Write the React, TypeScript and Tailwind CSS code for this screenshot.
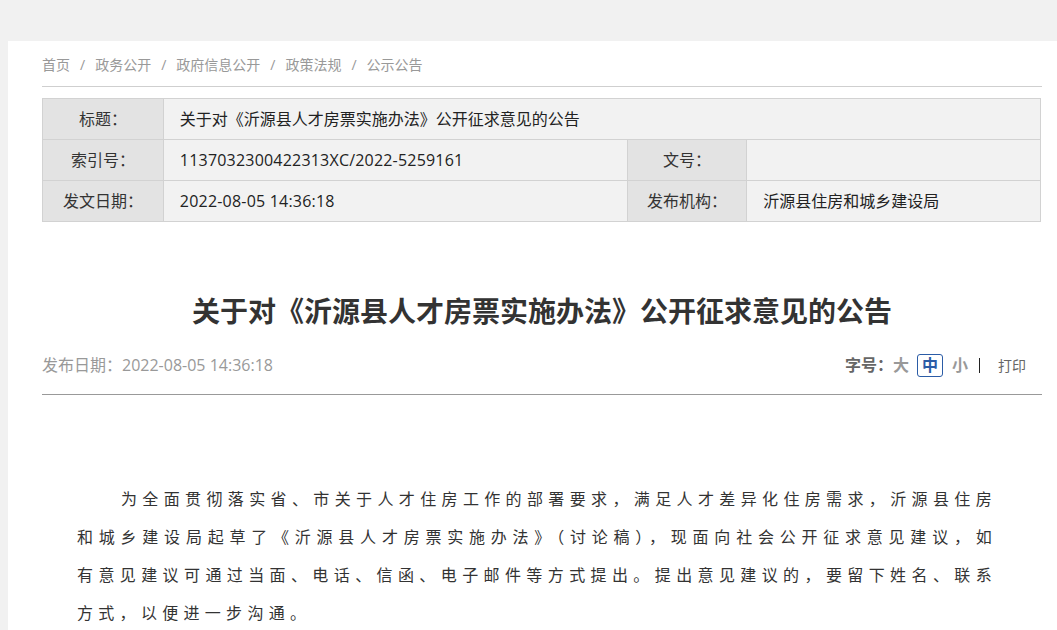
import React from "react";

const sans = '"Open Sans", "Noto Sans CJK SC", sans-serif';

export default function App() {
  const crumbs = ["首页", "政务公开", "政府信息公开", "政策法规", "公示公告"];
  return (
    <div className="min-h-[630px] bg-[#f1f1f1] pt-[41px] pl-[8px]" style={{ fontFamily: sans }}>
      <div className="bg-white min-h-[589px] pl-[34px]">
        <div className="w-[1000px]">
          {/* breadcrumb */}
          <div className="h-[46px] border-b border-[#cfcfcf] flex items-center pt-[2px] text-[14px] text-[#999]">
            {crumbs.map((c, i) => (
              <React.Fragment key={c}>
                {i > 0 && <span className="px-[10px]">/</span>}
                <span>{c}</span>
              </React.Fragment>
            ))}
          </div>

          {/* info table */}
          <table className="mt-[11px] w-[999px] border-collapse text-[16px] text-[#222]">
            <colgroup>
              <col className="w-[121px]" />
              <col className="w-[464px]" />
              <col className="w-[120px]" />
              <col className="w-[294px]" />
            </colgroup>
            <tbody>
              <tr className="h-[41px]">
                <td className="border border-[#d2d2d2] bg-[#e3e3e3] text-center text-[#333]">标题：</td>
                <td colSpan={3} className="border border-[#d2d2d2] bg-[#f2f2f2] pl-[16px]">
                  关于对《沂源县人才房票实施办法》公开征求意见的公告
                </td>
              </tr>
              <tr className="h-[41px]">
                <td className="border border-[#d2d2d2] bg-[#e3e3e3] text-center text-[#333]">索引号：</td>
                <td className="border border-[#d2d2d2] bg-[#f2f2f2] pl-[16px] tracking-[0.2px]">1137032300422313XC/2022-5259161</td>
                <td className="border border-[#d2d2d2] bg-[#e3e3e3] text-center text-[#333]">文号：</td>
                <td className="border border-[#d2d2d2] bg-[#f2f2f2] pl-[16px]"></td>
              </tr>
              <tr className="h-[41px]">
                <td className="border border-[#d2d2d2] bg-[#e3e3e3] text-center text-[#333]">发文日期：</td>
                <td className="border border-[#d2d2d2] bg-[#f2f2f2] pl-[16px] tracking-[0.2px]">2022-08-05 14:36:18</td>
                <td className="border border-[#d2d2d2] bg-[#e3e3e3] text-center text-[#333]">发布机构：</td>
                <td className="border border-[#d2d2d2] bg-[#f2f2f2] pl-[16px]">沂源县住房和城乡建设局</td>
              </tr>
            </tbody>
          </table>

          {/* title */}
          <h1 className="mt-[69px] h-[40px] leading-[40px] text-center text-[28px] font-bold text-[#333]">
            关于对《沂源县人才房票实施办法》公开征求意见的公告
          </h1>

          {/* meta */}
          <div className="mt-[22px] h-[24px] flex items-center justify-between text-[16px]">
            <span className="text-[#999]">发布日期：2022-08-05 14:36:18</span>
            <div className="flex items-center pr-[16px]">
              <span className="font-bold text-[#666]">字号：</span>
              <span className="text-[#999] font-bold">大</span>
              <span className="ml-[8px] w-[26px] h-[23px] flex items-center justify-center rounded-[3px] border border-[#2b5ca6] text-[#2b5ca6] font-bold">中</span>
              <span className="ml-[9px] text-[#999] font-bold">小</span>
              <span className="ml-[11px] w-[1px] h-[15px] bg-[#222]"></span>
              <span className="ml-[18px] text-[14px] text-[#666]">打印</span>
            </div>
          </div>
          <div className="mt-[17px] h-px bg-[#999]"></div>

          {/* body */}
          <div className="mt-[84px] pl-[35px] w-[955px]">
            <p
              className="indent-[44px] text-justify text-[16px] leading-[38px] tracking-[5.3px] text-[#333]"
              style={{ fontFamily: '"Noto Sans CJK SC", sans-serif' }}
            >
              为全面贯彻落实省、市关于人才住房工作的部署要求，满足人才差异化住房需求，沂源县住房和城乡建设局起草了《沂源县人才房票实施办法》（讨论稿），现面向社会公开征求意见建议，如有意见建议可通过当面、电话、信函、电子邮件等方式提出。提出意见建议的，要留下姓名、联系方式，以便进一步沟通。
            </p>
          </div>
        </div>
      </div>
    </div>
  );
}
